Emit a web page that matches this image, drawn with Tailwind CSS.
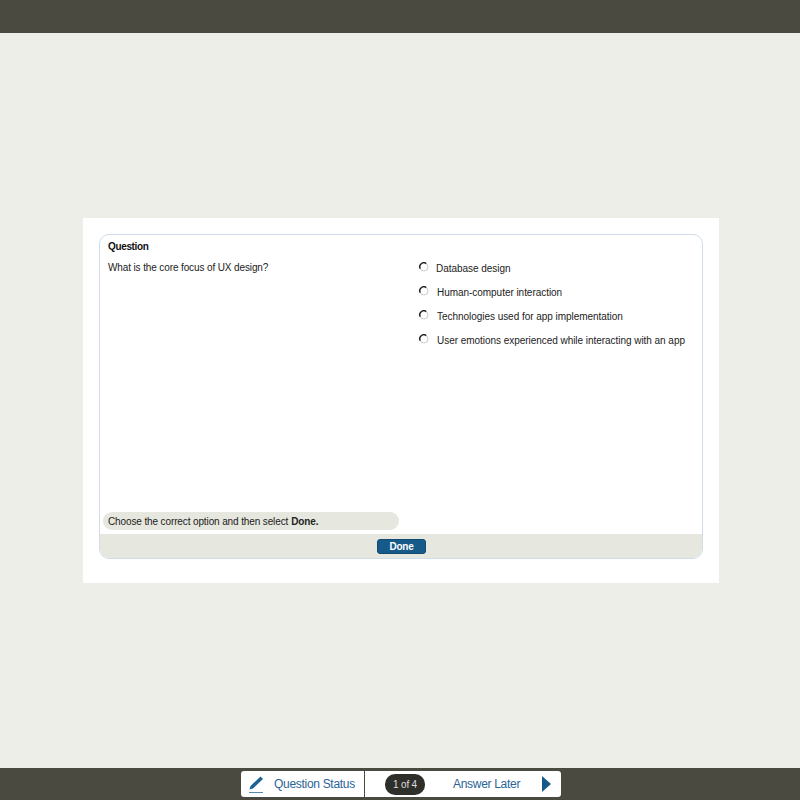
<!DOCTYPE html>
<html lang="en">
<head>
    <meta charset="UTF-8">
    <title>Question</title>
    <script src="https://cdn.jsdelivr.net/npm/@tailwindcss/browser@4"></script>
</head>
<body class="bg-[#edeee8] h-[800px] flex flex-col font-['Liberation_Sans',Arial,sans-serif] text-[10px] text-[#222]">

    <!-- Top bar -->
    <header class="h-[33px] bg-[#4a4a40]"></header>

    <!-- Question card -->
    <main class="flex-1 flex items-center justify-center pl-[2px]">
        <div class="w-[636px] h-[365px] bg-white pt-4 px-4 pb-[24px]">
            <div class="h-full flex flex-col border border-[#d0dce8] rounded-[10px] overflow-hidden">
                <div class="flex-1 flex">
                    <div class="w-[304px] flex flex-col pl-[3px] tracking-[-0.12px]">
                        <h2 class="pl-[5px] pt-[4px] h-[25px] font-bold tracking-[-0.35px] text-[#111]">Question</h2>
                        <p class="pl-[5px]">What is the core focus of UX design?</p>
                        <p class="mt-auto mb-[4px] w-[296px] h-[18px] pl-[5px] flex items-center gap-[3px] rounded-[9px] bg-[#e6e7de]">Choose the correct option and then select <b>Done.</b></p>
                    </div>
                    <ul class="pl-[15px] pt-[25px] flex flex-col gap-[7px] tracking-[-0.04px]">
                        <li class="h-[17px] flex items-center gap-[7px]">
                            <svg class="-mt-[3px]" width="10" height="10" viewBox="0 0 10 10"><circle cx="5" cy="5" r="4" fill="#fff" stroke="#ccc"/><path d="M1.2 6.6A4 4 0 0 1 7.2 1.6" fill="none" stroke="#222" stroke-width="1.4"/></svg>
                            <span>Database design</span>
                        </li>
                        <li class="h-[17px] flex items-center gap-[8px]">
                            <svg class="-mt-[3px]" width="10" height="10" viewBox="0 0 10 10"><circle cx="5" cy="5" r="4" fill="#fff" stroke="#ccc"/><path d="M1.2 6.6A4 4 0 0 1 7.2 1.6" fill="none" stroke="#222" stroke-width="1.4"/></svg>
                            <span>Human-computer interaction</span>
                        </li>
                        <li class="h-[17px] flex items-center gap-[8px]">
                            <svg class="-mt-[3px]" width="10" height="10" viewBox="0 0 10 10"><circle cx="5" cy="5" r="4" fill="#fff" stroke="#ccc"/><path d="M1.2 6.6A4 4 0 0 1 7.2 1.6" fill="none" stroke="#222" stroke-width="1.4"/></svg>
                            <span>Technologies used for app implementation</span>
                        </li>
                        <li class="h-[17px] flex items-center gap-[8px]">
                            <svg class="-mt-[3px]" width="10" height="10" viewBox="0 0 10 10"><circle cx="5" cy="5" r="4" fill="#fff" stroke="#ccc"/><path d="M1.2 6.6A4 4 0 0 1 7.2 1.6" fill="none" stroke="#222" stroke-width="1.4"/></svg>
                            <span>User emotions experienced while interacting with an app</span>
                        </li>
                    </ul>
                </div>
                <div class="h-[24px] flex items-center justify-center bg-[#e6e7de]">
                    <button class="w-[49px] h-[15px] ml-[1px] rounded-[3px] bg-[#165a8a] border border-[#124a72] text-white font-bold tracking-[-0.3px] flex items-center justify-center">Done</button>
                </div>
            </div>
        </div>
    </main>

    <!-- Bottom bar -->
    <footer class="h-[32px] bg-[#4a4a40] flex justify-center items-center pl-[2px]">
        <div class="w-[320px] h-[26px] flex gap-[1px] text-[12px] tracking-[-0.3px] text-[#2a6496]">
            <a class="w-[123px] bg-white rounded-l-[3px] flex items-center pl-[8px] gap-[9px]">
                <svg width="16" height="18" viewBox="0 0 16 18"><path d="M0.5 14.5 L1.5 11 L11.5 1.5 L14 4 L4 13.5 Z" fill="#1d6295"/><rect x="0" y="17" width="14" height="1" fill="#5588b0"/></svg>
                <span>Question Status</span>
            </a>
            <div class="flex-1 bg-white rounded-r-[3px] flex items-center pl-[20px]">
                <span class="w-[40px] h-[21px] rounded-[10px] bg-[#2e2e2a] text-[#ddd] text-[10px] tracking-[-0.2px] flex items-center justify-center">1 of 4</span>
                <a class="ml-[28px]">Answer Later</a>
                <svg class="ml-[22px]" width="9" height="16" viewBox="0 0 9 16"><path d="M0 0 L9 8 L0 16 Z" fill="#165a8a"/></svg>
            </div>
        </div>
    </footer>

</body>
</html>
